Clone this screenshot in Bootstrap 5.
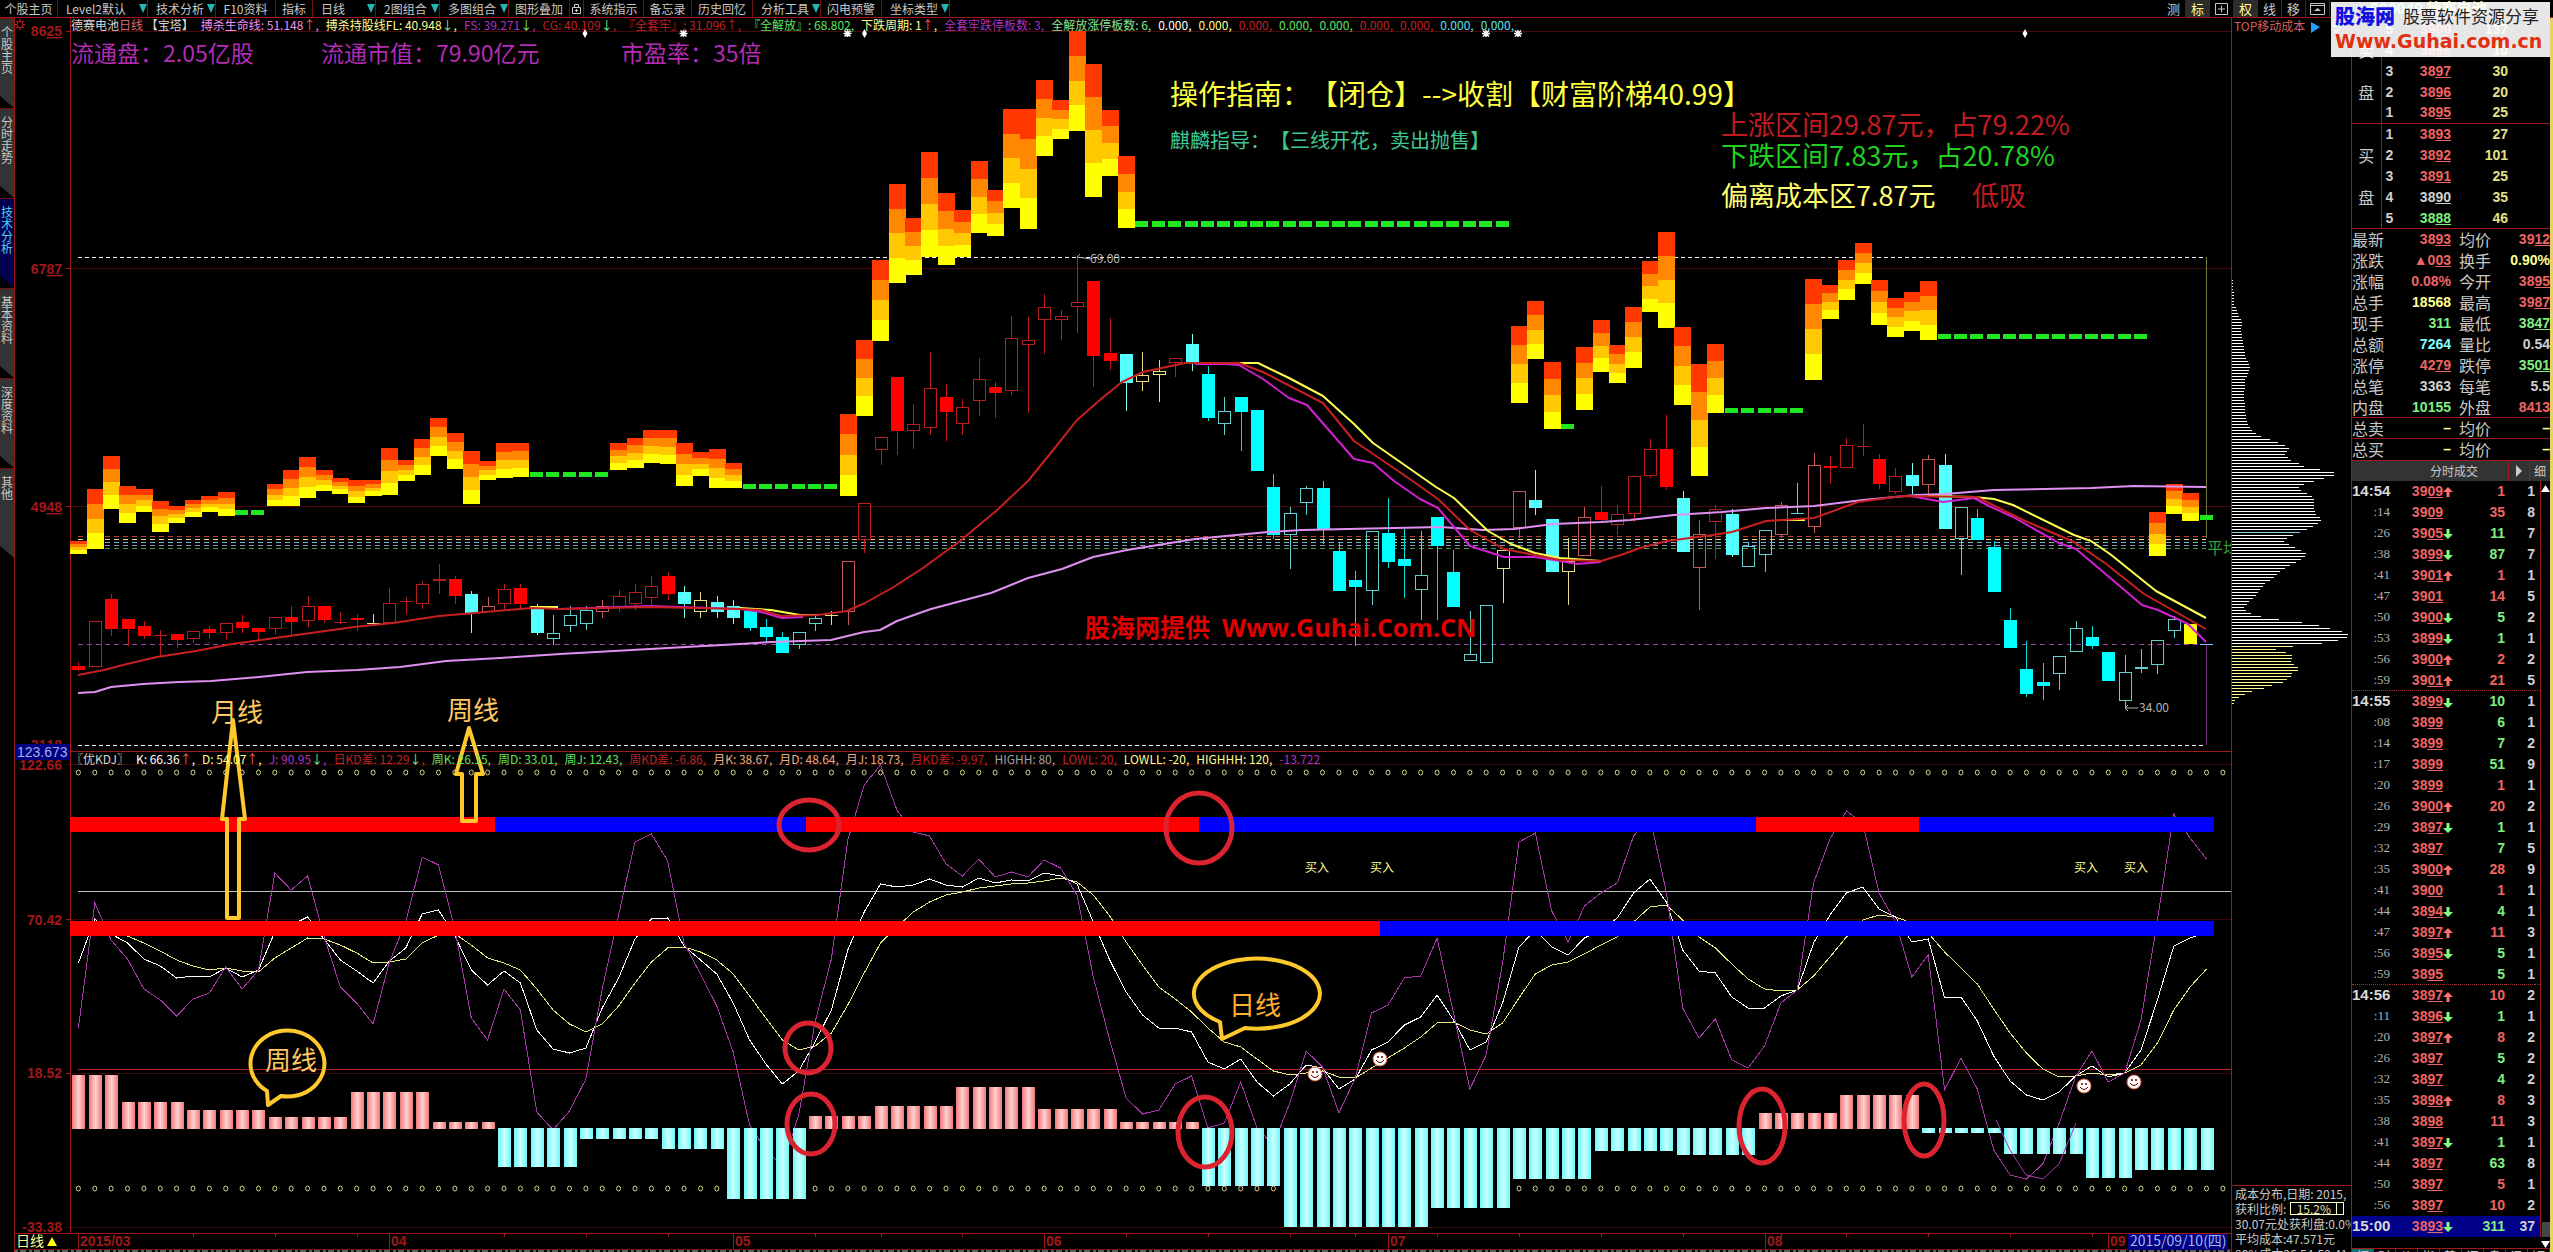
<!DOCTYPE html>
<html lang="zh-CN">
<head>
<meta charset="utf-8">
<title>德赛电池 日线</title>
<link rel="stylesheet" href="https://cdn.jsdelivr.net/npm/bootstrap@5.3.0/dist/css/bootstrap.min.css">
<style>
:root{--line:#a01818;--cjk:"Noto Sans CJK SC",sans-serif;--num:"Liberation Sans","Noto Sans CJK SC",sans-serif}
body{background:#000;color:#c8c8c8;font-family:var(--cjk);font-size:12px;line-height:12px;overflow:hidden}
button{background:none;border:0;padding:0;color:inherit;font:inherit;line-height:inherit}
.topbar{height:18px;border-bottom:1px solid var(--line)}
.topbar button{height:17px;border-right:1px solid #701010;white-space:nowrap;padding:0 5px;font-size:12px}
.topbar .tool{width:24px;padding:0;font-size:13px}
.topbar .on{background:#2c2c2c;color:#ffff90}
.topbar svg{display:inline-block;vertical-align:middle}
.side{width:15px;border-right:1px solid var(--line)}
.side button{width:14px;height:90px;background:#333;border-top:1px solid #701010;font-size:12px;line-height:12px;padding-top:7px;clip-path:polygon(0 0,100% 0,100% 100%,0 calc(100% - 12px))}
.side button span{display:block;width:12px;height:82px;margin-left:1px}
.side .on{background:#000050;color:#50d0f0}
.plot svg{display:block;width:100%;height:auto}
.plot text{font-family:var(--cjk);text-spacing-trim:space-all;font-kerning:none}
.plot .ax{font-family:var(--num);font-weight:700;font-size:14px;fill:#a01818}
.readout{left:56px;white-space:nowrap;gap:7px}
.read-a{top:1px}
.read-b{top:735px}
.cost{width:120px;border-left:1px solid var(--line)}
.cost-title{height:18px;padding:2px 0 0 2px;color:#d06060;white-space:nowrap}
.cost-info{border-top:1px solid var(--line);height:78px;padding-left:3px;white-space:nowrap;font-size:12px;line-height:15px}
.ratio{border:1px solid #ffffc0;width:54px;height:13px;line-height:11px;color:#e0e0b0}
.ratio b{font-weight:400;width:46px;border-right:1px solid #ffffc0}
.quote{width:202px;border-left:1px solid var(--line);border-right:3px solid #e8d460}
.quote table{width:100%;table-layout:fixed;border-collapse:collapse;font-family:var(--num);font-weight:700;font-size:14px;line-height:20px}
.quote td,.quote th{height:21px;padding:0;white-space:nowrap;overflow:visible}
.quote th{font-family:var(--cjk);font-weight:400;font-size:16px;line-height:20px}
.stock{width:223px;font-size:15px;line-height:16px;font-weight:700;padding-left:40px}
.side-lab{border-right:1px solid var(--line);text-align:center}
.line-t td,.line-t th{border-top:1px solid var(--line)}
.r{color:#ee6464}.g{color:#80ee80}.w{color:#d0d0d0}.y{color:#ffff90}.k{color:#e0e088}.c{color:#80ffff}
.tick-head{height:21px;background:#333;border-top:1px solid var(--line);font-size:12px}
.tick-head button{width:21px;border-left:1px solid var(--line)}
.ticks .t{font-family:"Liberation Serif",serif;font-weight:400;font-size:13px;color:#b0b0b0}
.ticks .m{font-size:15px;color:#d8d8d8}
.ticks .dot td{border-top:1px dotted #a03030}
.ticks .cur td{background:#000088}
.scroller{width:10px;border-left:1px solid var(--line)}
.thumb{width:8px;height:15px;background:#404848}
.foot-tabs{border-top:1px solid var(--line)}
.foot-tabs button{width:22px;height:14px;border-right:1px solid var(--line);font-size:13px}
.foot-tabs .on{background:#107070}
.stamp{top:2px;right:3px;width:219px;height:55px;background:rgba(255,255,255,.9)}
.stamp .cn{color:#1010e0;font-size:20px;line-height:28px;font-weight:900}
.stamp .sub{color:#222;font-size:17px;line-height:28px}
.stamp .url{color:#e03010;font-family:"DejaVu Sans",sans-serif;font-weight:700;font-size:19px;line-height:22px}
</style>
<script src="https://cdn.jsdelivr.net/npm/bootstrap@5.3.0/dist/js/bootstrap.bundle.min.js"></script>
</head>
<body class="vh-100 d-flex flex-column position-relative">
<nav class="topbar d-flex justify-content-between flex-shrink-0">
  <div class="d-flex" id="menu"></div>
  <div class="d-flex">
    <button class="tool">测</button><button class="tool on">标</button>
    <button class="tool"><svg width="13" height="13" fill="none" stroke="#c8c8c8"><path d="M.5 1.5h12v11H.5zM6.500 3.500v7M3 7h7"/></svg></button>
    <button class="tool on">权</button><button class="tool">线</button><button class="tool">移</button>
    <button class="tool"><svg width="15" height="13" fill="none" stroke="#c8c8c8"><path d="M.5 1.500h14v11H.5zM.5 3.500h14"/><path d="M4 9l3.500-3L11 9z" fill="#c8c8c8" stroke="none"/></svg></button>
    <div class="stock overflow-hidden"><span class="c">000049</span> <span class="y">德赛电池</span></div>
  </div>
</nav>
<main class="d-flex flex-grow-1">
  <aside class="side d-flex flex-column flex-shrink-0" id="tabs"></aside>
  <section class="plot flex-grow-1 position-relative" id="plot">
    <div class="readout read-a position-absolute d-flex" id="readA"></div>
    <div class="readout read-b position-absolute d-flex" id="readB"></div>
  </section>
  <aside class="cost flex-shrink-0 d-flex flex-column">
    <div class="cost-title d-flex">TOP移动成本
      <svg width="40" height="15" class="ms-1"><path d="M2 2l9 5-9 6z" fill="#20a0ff"/><path d="M22.500 1.500h15v12h-15z" fill="none" stroke="#802020"/><path d="M24 3l12 4-12 1z" fill="#30d0c0"/><path d="M24 10h8M24 12h5" stroke="#ccc"/></svg>
    </div>
    <div class="flex-grow-1" id="dist"></div>
    <div class="cost-info overflow-hidden">
      <div>成本分布,日期: 2015,</div>
      <div class="d-flex align-items-center">获利比例:<span class="ratio ms-1 d-flex"><b class="text-center">15.2%</b></span></div>
      <div>30.07元处获利盘:0.0%</div>
      <div>平均成本:47.571元</div>
      <div>90%成本36.54-59.41,</div>
    </div>
  </aside>
  <aside class="quote flex-shrink-0 d-flex flex-column">
    <table><colgroup><col style="width:29px"><col style="width:12px"><col style="width:58px"><col style="width:57px"><col></colgroup><tbody id="book"></tbody></table>
    <table><colgroup><col style="width:36px"><col style="width:63px"><col style="width:44px"><col></colgroup><tbody id="info"></tbody></table>
    <div class="tick-head d-flex"><span class="flex-grow-1 text-center ps-5 pt-1">分时成交</span><button aria-label="更多"><svg width="8" height="12"><path d="M1 0l6 6-6 6z" fill="#ccc"/></svg></button><button>细</button></div>
    <div class="d-flex">
      <table class="ticks"><colgroup><col style="width:38px"><col style="width:53px"><col style="width:12px"><col style="width:50px"><col style="width:30px"><col></colgroup><tbody id="ticks"></tbody></table>
      <div class="scroller d-flex flex-column align-items-center flex-shrink-0 pt-1">
        <svg width="9" height="7"><path d="M0 7l4.500-7L9 7z" fill="#fff"/></svg>
        <div class="flex-grow-1"></div><div class="thumb"></div>
      </div>
    </div>
    <div class="d-flex justify-content-end"><svg width="9" height="7" class="mt-1"><path d="M0 0h9L4.500 7z" fill="#fff"/></svg></div>
    <div class="foot-tabs d-flex overflow-hidden" id="foot"></div>
  </aside>
</main>
<div class="stamp position-absolute ps-1">
  <div class="d-flex gap-2"><span class="cn">股海网</span><span class="sub">股票软件资源分享</span></div>
  <div class="url">Www.Guhai.com.cn</div>
</div>
<script>
const $=id=>document.getElementById(id);
/* menus */
$('menu').innerHTML=[['个股主页',58],['Level2默认',90,1],['技术分析',68,1],['F10资料',60],['指标',37],['日线',63,1],['2图组合',64,1],['多图组合',69,1],['图形叠加',61],['@',14],['系统指示',60],['备忘录',48],['历史回忆',61],['分析工具',68,1],['闪电预警',61],['坐标类型',68,1]]
 .map(([t,w,a])=>`<button style="width:${w}px" class="d-flex align-items-center justify-content-${a?'between':'center'} p-0 ${a?'ps-2 pe-0':''}">${t=='@'?'<svg width="11" height="13" fill="none" stroke="#ccc"><path d="M1.500 5.500h8v6h-8zM3.500 5V2.500h4V5M5.500 7v3M4 8.500h3"/></svg>':t}${a?'<svg width="8" height="9"><path d="M0 0h8L4 9z" fill="#20b8b0"/></svg>':''}</button>`).join('');
$('tabs').innerHTML=['个股主页','分时走势','技术分析','基本资料','深度资料','其他'].map((t,i)=>`<button class="${i==2?'on':''}"><span>${[...t].join('<br>')}</span></button>`).join('');
$('foot').innerHTML=[...'细财价指势问盘讯短'].map((t,i)=>`<button class="${i?'':'on'}">${t}</button>`).join('');
/* readouts */
const span=a=>a.map(([t,c])=>`<span style="color:${c}">${t}</span>`).join('');
const W='#d8d8d8',Y='#ffff90',M='#b030c0',R='#c02020',G='#60e060',P='#f090f0',C='#60e0f0';
$('readA').innerHTML=span([['德赛电池<i class="fst-normal" style="color:#e06868">日线</i> 【宝塔】',W],['搏杀生命线: 51.148<i class="fst-normal r">↑</i>,',P],['搏杀持股线FL: 40.948<i class="fst-normal g">↓</i>,',Y],['FS: 39.271<i class="fst-normal g">↓</i>,',M],['CG: 40.109<i class="fst-normal g">↓</i>,',R],['『全套牢』: 31.096↑,',R],['『全解放』: 68.802,',G],['下跌周期: 1<i class="fst-normal r">↑</i>,',Y],['全套牢跌停板数: 3,',M],['全解放涨停板数: 6,','#90e090'],['0.000,','#fff'],['0.000,',Y],['0.000,',R],['0.000,',G],['0.000,',G],['0.000,',R],['0.000,',R],['0.000,',C],['0.000,',C]]);
$('readB').innerHTML=span([['〖优KDJ〗',W],['K: 66.36<i class="fst-normal r">↑</i>,','#fff'],['D: 54.07<i class="fst-normal r">↑</i>,',Y],['J: 90.95<i class="fst-normal g">↓</i>,',M],['日KD差: 12.29<i class="fst-normal g">↓</i>,',R],['周K: 26.15,',G],['周D: 33.01,',G],['周J: 12.43,',G],['周KD差: -6.86,',R],['月K: 38.67,','#f0a880'],['月D: 48.64,','#f0a880'],['月J: 18.73,','#f0a880'],['月KD差: -9.97,',R],['HIGHH: 80,','#a0a0a0'],['LOWL: 20,',R],['LOWLL: -20,',Y],['HIGHHH: 120,',Y],['-13.722',M]]);
/* tables */
const pr=p=>p.slice(0,-2)+'<u>'+p.slice(-2)+'</u>';
const book=[['',5,'3900','137','r'],['卖',4,'3898','10','r'],['',3,'3897','30','r'],['盘',2,'3896','20','r'],['',1,'3895','25','r'],['',1,'3893','27','r'],['买',2,'3892','101','r'],['',3,'3891','25','r'],['盘',4,'3890','35','w'],['',5,'3888','46','g']];
$('book').innerHTML=book.map((b,i)=>`<tr class="${i==5?'line-t':''}"><th class="side-lab">${b[0]}</th><td class="w ps-1">${b[1]}</td><td class="text-end ${b[4]}">${pr(b[2])}</td><td class="text-end k">${b[3]}</td><td></td></tr>`).join('');
const info=[['最新','3893','r','均价','3912','r'],['涨跌','▲003','r','换手','0.90%','y'],['涨幅','0.08%','r','今开','3895','r'],['总手','18568','y','最高','3987','r'],['现手','311','g','最低','3847','g'],['总额','7264','c','量比','0.54','w'],['涨停','4279','r','跌停','3501','g'],['总笔','3363','w','每笔','5.5','w'],['内盘','10155','g','外盘','8413','r'],['总卖','–','y','均价','–','y'],['总买','–','y','均价','–','y']];
const und={3893:1,3912:1,'▲003':1,3895:1,3987:1,3847:1,4279:1,3501:1},v=s=>und[s]?pr(s):s;
$('info').innerHTML=info.map((b,i)=>`<tr class="${i==0||i>8?'line-t':''}"><th>${b[0]}</th><td class="text-end ${b[2]}">${v(b[1])}</td><th class="ps-2">${b[3]}</th><td class="text-end ${b[5]}">${v(b[4])}</td></tr>`).join('');
const ticks=`14:54 3909 u 1 r 1|:14 3909 - 35 r 8|:26 3905 d 11 g 7|:38 3899 d 87 g 7|:41 3901 u 1 r 1|:47 3901 - 14 r 5|:50 3900 d 5 g 2|:53 3899 d 1 g 1|:56 3900 u 2 r 2|:59 3901 u 21 r 5|14:55 3899 d 10 g 1|:08 3899 - 6 g 1|:14 3899 - 7 g 2|:17 3899 - 51 g 9|:20 3899 - 1 r 1|:26 3900 u 20 r 2|:29 3897 d 1 g 1|:32 3897 - 7 g 5|:35 3900 u 28 r 9|:41 3900 - 1 r 1|:44 3894 d 4 g 1|:47 3897 u 11 r 3|:56 3895 d 5 g 1|:59 3895 - 5 g 1|14:56 3897 u 10 r 2|:11 3896 d 1 g 1|:20 3897 u 8 r 2|:26 3897 - 5 g 2|:32 3897 - 4 g 2|:35 3898 u 8 r 3|:38 3898 - 11 r 3|:41 3897 d 1 g 1|:44 3897 - 63 g 8|:50 3897 - 5 r 1|:56 3897 - 10 r 2|15:00 3893 d 311 g 37`.split('|').map(s=>s.split(' '));
const arw={u:'<svg width="10" height="10"><path d="M5 0l5 5H6.500v5h-3V5H0z" fill="#ff7070"/></svg>',d:'<svg width="10" height="10"><path d="M5 10l5-5H6.500V0h-3v5H0z" fill="#80ff80"/></svg>','-':''};
$('ticks').innerHTML=ticks.map((t,i)=>`<tr class="${i==10||i==24?'dot':''} ${i==35?'cur':''}"><td class="text-end ${t[0].length>3?'m':'t'}">${t[0]}</td><td class="text-end r">${pr(t[1])}</td><td>${arw[t[2]]}</td><td class="text-end ${t[4]}">${t[3]}</td><td class="text-end w">${t[5]}</td><td></td></tr>`).join('');
/* cost distribution: [y, length] knots, one line every 3px */
const knots=[[280,1],[303,2],[313,6],[322,10],[330,9],[343,11],[355,13],[367,18],[373,16],[380,13],[397,12],[420,14],[430,20],[437,30],[440,42],[445,53],[448,57],[454,53],[460,59],[463,67],[467,74],[469,88],[472,102],[476,102],[478,92],[481,82],[484,72],[487,67],[491,70],[493,75],[497,82],[510,82],[515,85],[518,89],[521,89],[524,85],[527,79],[530,73],[533,66],[536,59],[539,53],[542,52],[544,57],[547,63],[550,69],[553,74],[556,73],[559,69],[562,64],[565,58],[571,48],[577,42],[583,33],[589,28],[595,24],[601,17],[607,12],[610,14],[613,19],[616,29],[619,47],[622,70],[625,87],[628,98],[631,110],[634,116],[637,115],[640,106],[643,90],[646,61],[649,44],[652,54],[655,60],[662,59],[667,66],[670,66],[673,60],[677,58],[682,51],[685,40],[688,32],[691,20],[694,13],[697,7],[700,3],[704,1]];
const len=y=>{let i=knots.findIndex(k=>k[0]>=y);if(i<=0)return knots[0][1];const[a,b]=[knots[i-1],knots[i]];return a[1]+(b[1]-a[1])*(y-a[0])/(b[0]-a[0])};
let d='';for(let y=280;y<704;y+=3)d+=`<path d="M0 ${y-35.5}h${len(y).toFixed(0)}" stroke="${y>=646?'#ffff90':y==532?'#80d0e0':'#fff'}"/>`;
$('dist').innerHTML=`<svg class="d-block w-100" height="700" shape-rendering="crispEdges">${d}</svg>`;
/* chart */
const X=i=>78.4+16.37*i,o=[];
const E=s=>o.push(s),L=(x1,y1,x2,y2,c,x='')=>E(`<path d="M${x1} ${y1}L${x2} ${y2}" stroke="${c}" ${x}/>`);
const box=(x,y,w,h,f,x2='')=>E(`<rect x="${x}" y="${y}" width="${w}" height="${h}" fill="${f}" ${x2}/>`);
const T=(x,y,s,f,t,x2='')=>E(`<text x="${x}" y="${y}" font-size="${s}" fill="${f}" ${x2}>${t}</text>`);
E('<g shape-rendering="crispEdges" fill="none">');
for(const y of[31.5,268.500,506.500,764.500,919.500,1073.500,1227.500])L(66,y,2231,y,y>700?'#3a0808':'#480a0a');
L(70.5,18,70.5,1233,'#a01818');L(15,751.5,2231,751.5,'#a01818');L(15,1233.5,2231,1233.5,'#a01818');L(15,1249.5,2231,1249.5,'#801010');
L(78,257.500,2206,257.500,'#fff','stroke-dasharray="4 3"');
[['#c04030',536.500],['#e8e080',539.500],['#70b8c8',542.500],['#9090c8',545.500],['#50a050',548.500]].forEach(([c,y])=>L(78,y,2206,y,c,'stroke-dasharray="5 4"'));
L(78,644.500,2206,644.500,'#a040b0','stroke-dasharray="5 4"');
L(78,745.500,2206,745.500,'#fff','stroke-dasharray="4 3"');
L(2206.500,257,2206.500,538,'#707840');L(2206.500,644,2206.500,745,'#702878');L(2200,644.500,2213,644.500,'#80c0ff');
/* tower: slot:top,bottom */
const cols=['#ff3800','#ff8800','#ffc800','#ffff00'];
const tower='0:541,553 1:489,548 2:456,508 3:486,522 4:489,511 5:501,531 6:506,522 7:500,516 8:496,511 9:492,515 12:484,505 13:470,505 14:457,497 15:470,490 16:478,493 17:480,502 18:480,495 19:448,494 20:460,480 21:439,474 22:418,455 23:433,468 24:451,503 25:461,479 26:443,477 27:443,476 33:443,469 34:438,467 35:430,462 36:430,463 37:443,485 38:452,475 39:449,487 40:463,487 47:414,495 48:340,415 49:260,340 50:184,282 51:218,274 52:152,256 53:193,264 54:210,256 55:161,232 56:190,235 57:109,207 58:109,228 59:80,155 60:100,138 61:31,130 62:64,196 63:110,175 64:156,227 88:326,402 89:301,358 90:362,428 92:347,409 93:320,371 94:345,382 95:307,367 96:261,311 97:232,327 98:327,404 99:364,475 100:344,412 106:279,379 107:285,318 108:260,299 109:243,283 110:280,324 111:298,336 112:292,330 113:281,339 127:512,555 128:484,513 129:493,520';
tower.split(' ').forEach(s=>{const[i,r]=s.split(':'),[a,b]=r.split(',').map(Number),h=(b-a)/4,x=Math.round(X(+i)-8.2);cols.forEach((c,k)=>box(x,a+k*h,17,h+.5,c))});
[[10,11,510],[28,32,472],[41,46,484],[65,87,221],[91,91,424],[101,105,408],[114,126,334],[130,130,515]].forEach(([a,b,y])=>{for(let i=a;i<=b;i++)box(Math.round(X(i)-7),y,13,y==221?6:5,'#20e820')});
/* candles: slot type bodyTop bodyBottom high low */
const K={r:['#ff0000','#c01818',1],h:['#b81c1c','#b81c1c'],l:['#c85858','#c85858'],c:['#00ffff','#00e0e0',1],C:['#55ffff','#80ffff',1],o:['#60d0d0','#60d0d0'],y:['#e8e080','#e8e080'],Y:['#ffff00','#ffff00',1]};
const cd=`0r666,670,662,671 1h621,667 2r599,629,594,636 3r619,629,619,646 4r626,636,621,639 5h635,635,630,656 6r634,640,634,648 7h631,639,631,643 8r629,633,626,639 9h623,633,623,640 10r622,628,615,633 11r628,632,628,640 12h617,629,617,634 13r617,622,606,636 14h606,621,596,627 15r606,620,606,623 16h622,622,612,624 17r618,620,614,631 18y623,624,614,624 19h603,623,588,623 20h601,601,597,614 21h584,604,581,609 22h579,581,564,594 23r579,596,576,604 24C594,613,591,633 25l606,612,597,612 26h589,604,584,609 27r588,604,584,610 28C609,633,604,635 29o633,639,615,645
30o615,626,606,632 31o610,624,606,630 32l606,612,600,618 33h596,608,590,612 34h592,604,584,610 35h586,598,576,606 36r576,594,572,600 37C592,604,586,618 38y600,612,592,618 39C602,612,596,618 40C606,618,600,624
41c611,628,611,631 42c627,637,619,642 43c637,653,632,653 44o632,645,632,649 45o618,624,615,631 46y615,616,611,625 47l561,612,561,625 48h503,540,503,553 49h437,450,437,465 50r377,431,377,455 51h424,431,404,449 52h388,428,352,435 53r397,412,384,441 54h407,424,399,435 55h379,401,358,416 56r387,393,382,418 57h338,391,316,395 58h340,345,317,413 59h307,320,294,354 60h316,320,310,340 61h302,307,256,333 62r281,356,281,387 63r353,361,318,370 64C354,383,354,411 65y375,382,352,391 66y371,375,360,402 67h358,363,358,377 68C344,362,334,371 69c374,418,366,421 70o411,424,397,435 71c397,412,397,451 72c410,471 73c487,535,474,539 74o513,535,507,569 75o488,503,486,515 76c488,530,481,544 77c551,591,542,591 78c580,587,571,646 79o531,591,531,605 80c533,562,498,568 81c559,566,529,598 82o575,590,531,620 83c517,546,517,620 84c572,607,550,607 85o654,661,611,661 86o605,663 87y550,569,550,603 88l491,528,491,538 89C500,508,470,515 90C519,572 91y561,572,538,605 92l517,556,507,556 93r512,520,486,522 94h514,525,505,535 95h476,514,476,522 96h449,476,439,478 97r449,487,415,490 98C498,552,491,552 99l534,568,520,610 100h509,522,505,559 101C514,555,509,557 102o546,567,542,567 103o530,555,530,572 104l505,535,502,538 105o513,513,483,513 106l465,527,453,533 107r466,468,456,484 108h445,468,438,468 109h446,446,424,456 110r459,484,454,489 111h476,492,468,494 112C475,486,463,494 113l459,485,455,494 114C465,529,454,529 115o507,539,507,575 116c518,540,509,540 117c547,592,541,592 118c620,648,608,648 119c669,694,641,697 120c682,686,663,700 121o656,674,656,690 122o628,652,621,652 123c637,646,626,649 124c652,681 125o672,701,655,709 126o667,669,649,673 127o640,665,640,674 128o619,631,616,638 129Y624,644`;
cd.split(/\s+/).forEach(s=>{const m=s.match(/(\d+)([a-zA-Z])(.*)/),i=+m[1],[f,w,solid]=K[m[2]],[a,b,hi,lo]=m[3].split(',').map(Number),x=Math.round(X(i));
 if(hi!=null){L(x+.5,hi,x+.5,a,w);L(x+.5,b,x+.5,lo,w)}
 if(solid)box(x-6,a,13,b-a,f);else if(b-a<2)L(x-6,a+.5,x+7,a+.5,f);else E(`<rect x="${x-5.5}" y="${a+.5}" width="12" height="${b-a-1}" stroke="${f}"/>`)});
E('</g><g fill="none" stroke-width="2" stroke-linejoin="round">');
const PL=(p,c,w=2)=>E(`<polyline points="${p}" stroke="${c}" stroke-width="${w}"/>`);
PL('78,693 95,692 111,687 143,684 179,682 211,681 259,677 307,672 357,670 400,667 446,661 500,658 560,654 650,649 740,644 771,642 831,640 864,632 880,630 897,621 931,609 991,593 1028,578 1062,569 1093,557 1127,550 1158,545 1195,539 1226,536 1268,532 1302,530 1394,528 1441,527 1483,530 1514,529 1553,524 1601,522 1630,520 1674,515 1722,512 1766,508 1814,506 1863,500 1916,495 1945,494 1994,490 2091,488 2134,486 2206,487','#e090f0');
for(const p of['560,609 650,606 740,609 761,612 782,618 803,617','1195,364 1226,364 1239,365 1263,379 1289,398 1307,405 1354,459 1373,463 1394,481 1420,499 1438,508 1470,546 1504,557 1535,557 1560,561 1577,564 1601,562','1911,496 1943,502 1974,498 1989,506 2013,517 2059,543 2076,549 2115,582 2142,605 2158,610 2173,617 2188,624 2206,642'])PL(p,'#d020d0');
for(const p of['530,607 558,607','740,608 771,610 800,615 818,615','1239,363 1258,363 1289,378 1323,396 1354,424 1373,443 1436,487 1454,498 1488,531 1511,544 1535,553 1560,558 1601,561','1780,520 1805,520','1928,496 1974,497 1994,499 2013,505 2074,535 2091,541 2110,554 2156,591 2206,618'])PL(p,'#ffff50');
PL('78,675 104,670 127,664 157,657 196,651 232,644 268,639 311,633 354,627 393,623 439,616 475,613 507,610 532,608 560,609 650,607 740,609 761,610 782,616 818,615 847,611 865,603 892,588 923,568 960,541 996,511 1028,481 1054,449 1077,420 1101,399 1122,382 1143,372 1185,363 1239,363 1263,372 1323,403 1354,441 1404,475 1438,499 1470,530 1504,549 1535,555 1560,560 1601,561 1621,555 1640,548 1667,541 1713,535 1732,532 1766,521 1814,518 1858,502 1902,496 1977,497 2023,520 2074,542 2105,563 2144,594 2206,629','#c82020');
E('</g>');
/* KDJ lines */
const S=(a,c)=>PL(a.trim().split(/\s+/).map((v,i)=>X(i).toFixed(1)+','+v).join(' '),c,1);
E('<g fill="none" shape-rendering="crispEdges">');
L(78,891.500,2231,891.500,'#c0c0c0');L(78,1069.500,2231,1069.500,'#b02020');
S(`928 926 930 936 943 951 960 966 970 968
971 972 958 948 938 939 945 953 963 962
959 943 935 934 945 958 963 970 989 1010
1024 1032 1024 1006 983 962 948 947 952 960
974 996 1018 1040 1050 1046 1033 1005 973 943
927 912 902 895 892 888 886 884 883 881
878 882 895 916 942 965 987 999 1012 1028
1042 1047 1059 1071 1075 1073 1071 1077 1078 1068
1058 1048 1037 1023 1022 1030 1034 1023 998 974
965 962 954 945 937 922 907 905 920 937
948 964 979 989 991 990 976 957 937 920
915 917 923 933 952 968 984 1009 1033 1053
1069 1077 1076 1073 1075 1073 1065 1043 1010 987
969`,'#e8e880');
S(`963 919 934 943 959 966 978 976 977 968
977 970 932 925 917 939 960 971 983 961
948 914 910 936 970 985 971 983 1030 1049
1053 1048 1008 978 939 919 918 946 960 974
1003 1040 1064 1084 1071 1042 1010 950 912 884
887 885 879 885 887 878 883 880 881 873
876 884 922 960 992 1015 1028 1028 1032 1062
1069 1059 1082 1096 1084 1065 1068 1089 1079 1050
1042 1025 1017 995 1020 1050 1042 1003 947 930
947 955 938 930 918 893 879 902 950 971
973 997 1008 1008 996 990 943 915 893 887
909 917 942 939 998 997 1021 1056 1081 1095
1100 1092 1076 1066 1077 1073 1050 1000 946 938
932`,'#ffffff');
S(`1028 903 940 959 989 1000 1016 999 993 967
989 970 873 890 876 936 987 1003 1024 962
922 857 865 929 1018 1040 989 1010 1112 1130
1111 1079 989 915 842 834 861 943 974 1006
1052 1125 1150 1166 1115 1022 959 840 785 765
810 832 836 864 876 859 877 872 877 860
868 895 977 1040 1098 1114 1110 1084 1076 1128
1123 1082 1128 1145 1103 1051 1067 1113 1078 1013
1005 978 976 938 1013 1089 1055 963 842 833
911 942 906 893 883 836 817 892 1008 1038
1019 1060 1068 1046 1003 990 883 839 811 823
893 922 977 955 1090 1058 1089 1150 1175 1179
1164 1123 1077 1051 1082 1073 1020 920 814 838
859`,'#a838a8');
/* weekly and monthly bands */
[[70,495,'f00'],[495,806,'00f'],[806,1199,'f00'],[1199,1756,'00f'],[1756,1919,'f00'],[1919,2214,'00f']].forEach(([a,b,c])=>box(a,817,b-a,15,'#'+c));
box(70,921,1310,15,'#f00');box(1380,921,834,15,'#00f');
E('</g>');
/* markers */
for(let i=0;i<132;i++)for(const y of[772,1188])E(`<ellipse cx="${X(i).toFixed(1)}" cy="${y}.500" rx="2" ry="2.500" fill="none" stroke="#d8d890"/>`);
E('<g shape-rendering="crispEdges">');
[[0,2,1075],[3,6,1102],[7,11,1110],[12,16,1117],[17,21,1092],[22,25,1122],[26,30,1167],[31,35,1139],[36,39,1149],[40,44,1199],[45,48,1116],[49,53,1106],[54,58,1087],[59,63,1109],[64,68,1122],[69,73,1186],[74,82,1227],[83,87,1208],[88,92,1179],[93,97,1151],[98,102,1155],[103,107,1113],[108,112,1095],[113,117,1133],[118,122,1154],[123,125,1178],[126,130,1170]].forEach(([a,b,y])=>{for(let i=a;i<=b;i++){const x=Math.round(X(i)-6);y<1128?box(x,y,13,1129-y,'url(#pk)'):box(x,1128,13,y-1128,'url(#cy)')}});
E('</g>');
E('<path d="M1996 1120L2010 1150L2026 1175L2043 1179L2059 1164L2076 1123" fill="none" stroke="#a838a8"/>');
/* axis labels */
const A=(y,t)=>E(`<text class="ax" x="62" y="${y}" text-anchor="end">${t}</text>`);
A(36,'86<tspan text-decoration="underline">25</tspan>');A(274,'67<tspan text-decoration="underline">87</tspan>');A(512,'49<tspan text-decoration="underline">48</tspan>');
A(750,'3118');A(770,'122.66');A(925,'70.42');A(1078,'18.52');A(1232,'-33.38');
for(const y of[31.500,268.500,506.500,919.500,1073.500])L(66,y,70,y,'#a01818');
box(15,744,54,16,'#000080');T(17,757,14,'#a0b0f0','123.673','style="font-family:Liberation Sans"');
E('<g stroke="#e02020" fill="none"><circle cx="20" cy="24.500" r="3"/><path d="M20 19v2M20 28v2M15 24.500h2M23 24.500h2M16 21l2 1M24 21l-2 1M16 28l2-1M24 28l-2-1"/></g>');
[[585,1],[683.500],[847.500],[864.500,1],[1486],[1518],[2025,1]].forEach(([x,k])=>k?E(`<path d="M${x} 29l2.500 4.500L${x} 38l-2.500-4.500z" fill="#fff"/>`):E(`<path d="M${x-4} 33.500h8M${x} 30v7M${x-3} 30.500l6 6M${x+3} 30.500l-6 6" stroke="#fff" stroke-width="1.500"/>`));
/* on-chart captions */
const c1='#b42cb4';
T(71,62,23,c1,'流通盘：2.05亿股');T(321,62,23,c1,'流通市值：79.90亿元');T(621,62,23,c1,'市盈率：35倍');
T(1170,105,28,'#ffff40','操作指南：【闭仓】--&gt;收割【财富阶梯40.99】');
T(1170,148,20,'#40c890','麒麟指导：【三线开花，卖出抛售】');
T(1721,135,27,'#c01c20','上涨区间29.87元，占79.22%');
T(1721,166,27,'#20d020','下跌区间7.83元，占20.78%');
T(1721,206,27,'#ffff70','偏离成本区7.87元');T(1972,206,27,'#c01c20','低吸');
T(1085,637,25,'#e00000','股海网提供','font-weight="700"');T(1222,637,25,'#e00000','Www.Guhai.Com.CN','style="font-family:Open Sans" font-weight="700"');
T(1090,263,12,'#b0b0b0','69.00');E('<path d="M1091 259L1077 257l3-3" stroke="#b0b0b0" fill="none"/>');
T(2139,712,12,'#b0b0b0','34.00');E('<path d="M2138 708h-13l3-3M2125 708l3 3" stroke="#b0b0b0" fill="none"/>');
T(2207,554,16,'#30a040','平均');
const gold='#ffc82c';
E(`<g fill="none" stroke="${gold}" stroke-width="4" stroke-linejoin="round"><path d="M233 720L222 819H227V918H239V819H245z"/><path d="M469 728L456 774H462V821H476V774H483z"/><path d="M267 1091A37 33 0 1 1 281 1096L268 1105z"/><path d="M1220 1022A63 35 0 1 1 1245 1028L1222 1039z"/></g>`);
T(211,722,26,'#ffc860','月线');T(447,720,26,'#ffc860','周线');T(265,1070,26,'#ffc860','周线');T(1229,1015,26,'#ffb030','日线');
E('<g fill="none" stroke="#dc2430" stroke-width="5">');
[[809,825,30,25],[808,1048,23,25],[811,1124,24,30],[1199,828,33,35],[1205,1132,27,35],[1762,1126,23,37],[1924,1120,20,36]].forEach(e=>E(`<ellipse cx="${e[0]}" cy="${e[1]}" rx="${e[2]}" ry="${e[3]}"/>`));
E('</g>');
for(const x of[1305,1370,2074,2124])T(x,872,12,'#ffff90','买入');
[[1315,1074],[1380,1059],[2084,1086],[2134,1082]].forEach(([x,y])=>E(`<g><circle cx="${x}" cy="${y}" r="7" fill="#fff" stroke="#e06040"/><circle cx="${x-2}" cy="${y-2}" r="1" fill="#600"/><circle cx="${x+2}" cy="${y-2}" r="1" fill="#600"/><path d="M${x-4} ${y+1}q4 5 8 0" fill="none" stroke="#600"/></g>`));
/* time axis */
T(16,1246,14,'#ffff90','日线');E('<path d="M47 1246l5-9 5 9z" fill="#ffff00"/>');
[[0,'2015/03'],[19,'04'],[40,'05'],[59,'06'],[80,'07'],[103,'08'],[124,'09']].forEach(([i,t])=>{const x=Math.round(X(i));L(x+.5,1234,x+.5,1249,'#a01818');E(`<text class="ax" x="${x+2}" y="1246">${t}</text>`)});
for(const i of[7,12,17,26,31,36,45,49,54,64,69,74,78,83,88,93,98,104,108,113,118,123]){const x=Math.round(X(i))+.5;L(x,1234,x,1237,'#a01818')}
box(2128,1234,100,16,'#000080');T(2130,1246,14,'#a0b8f0','2015/09/10(四)');
L(15,1251,2231,1251,'#606060','stroke-width="2" stroke-dasharray="3 2 6 3"');
$('plot').insertAdjacentHTML('afterbegin',`<svg viewBox="15 18 2216 1234"><defs><linearGradient id="pk"><stop offset="0" stop-color="#f07878"/><stop offset=".5" stop-color="#ffd0d0"/><stop offset="1" stop-color="#f07878"/></linearGradient><linearGradient id="cy"><stop offset="0" stop-color="#70f8f8"/><stop offset=".5" stop-color="#c8ffff"/><stop offset="1" stop-color="#70f8f8"/></linearGradient></defs>${o.join('')}</svg>`);
</script>
</body>
</html>
